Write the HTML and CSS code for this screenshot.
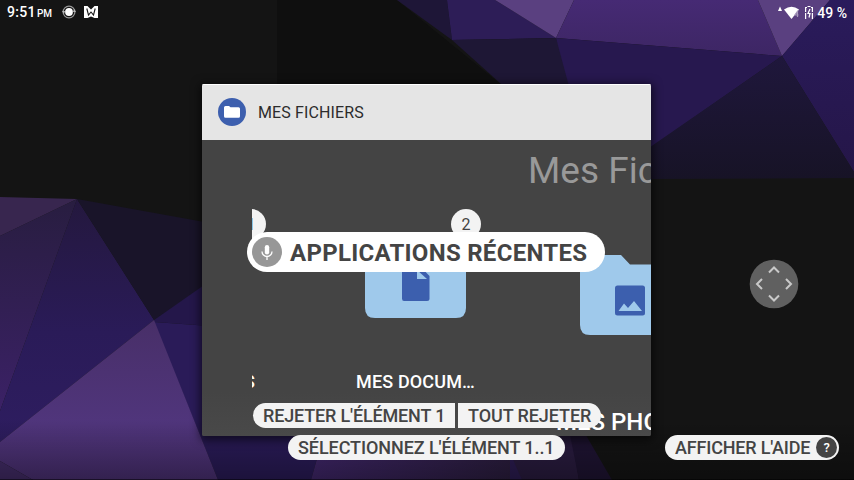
FILE: index.html
```html
<!DOCTYPE html>
<html lang="fr">
<head>
<meta charset="utf-8">
<title>Applications récentes</title>
<link rel="stylesheet" href="styles.css">
</head>
<body>
<main class="screen">
  <svg class="wallpaper" viewBox="0 0 854 480" aria-hidden="true">
    <defs>
      <linearGradient id="facet" x1="0" y1="0" x2="0" y2="1"><stop offset="0" stop-color="#482f68"/><stop offset=".65" stop-color="#50357c"/><stop offset="1" stop-color="#4c3175"/></linearGradient>
      <linearGradient id="deep" x1="0" y1="0" x2="0" y2="1"><stop offset="0" stop-color="#24183e"/><stop offset=".55" stop-color="#2a1b58"/><stop offset="1" stop-color="#2e1d60"/></linearGradient>
      <linearGradient id="left" x1="0" y1="0" x2="0" y2="1"><stop offset="0" stop-color="#281d40"/><stop offset="1" stop-color="#3b2166"/></linearGradient>
      <linearGradient id="dark" x1="0" y1="0" x2="0" y2="1"><stop offset="0" stop-color="#1f173c"/><stop offset="1" stop-color="#171326"/></linearGradient>
      <linearGradient id="right" x1="0" y1="0" x2="0" y2="1"><stop offset="0" stop-color="#2a1b5c"/><stop offset="1" stop-color="#251648"/></linearGradient>
      <linearGradient id="top" x1="0" y1="0" x2="0" y2="1"><stop offset="0" stop-color="#462a74"/><stop offset="1" stop-color="#3d2664"/></linearGradient>
      <linearGradient id="foot" x1="0" y1="0" x2="1" y2="0"><stop offset="0" stop-color="#41276c"/><stop offset="1" stop-color="#2a1d3c"/></linearGradient>
      <linearGradient id="fade" x1="0" y1="0" x2="0" y2="1"><stop offset="0" stop-color="#000" stop-opacity="0"/><stop offset="1" stop-color="#000" stop-opacity=".33"/></linearGradient>
    </defs>
    <rect width="854" height="480" fill="#141414"/>
    <path d="M277 0H397L520 100H277z" fill="#0f0f0f"/>
    <path d="M397 0H447L452 40z" fill="#1e1637"/>
    <path d="M447 0H495L556 38L452 40z" fill="#2d1d57"/>
    <path d="M495 0H574L556 38z" fill="#5a4080"/>
    <path d="M574 0H758L782 56L556 38z" fill="url(#top)"/>
    <path d="M758 0H830L782 56z" fill="#5a4080"/>
    <path d="M830 0H854V172L782 56z" fill="url(#right)"/>
    <path d="M452 40L556 38L575 92H510z" fill="#1e1735"/>
    <path d="M556 38L782 56L640 155L570 90z" fill="#27184f"/>
    <path d="M782 56L854 172V178L640 179V154z" fill="url(#dark)"/>
    <path d="M0 197L77 199L0 236z" fill="#38264f"/>
    <path d="M77 199L0 236V411z" fill="url(#left)"/>
    <path d="M77 199L154 320L0 442V411z" fill="url(#deep)"/>
    <path d="M77 199L210 223V282L154 320z" fill="#191429"/>
    <path d="M154 320L210 281V326L154 322z" fill="#24174a"/>
    <path d="M154 322L210 326V430H325L311 480H218z" fill="#2a1b58"/>
    <path d="M154 320L0 442V461L33 480H218z" fill="url(#facet)"/>
    <path d="M0 461L33 480H0z" fill="#432c68"/>
    <path d="M325 430H515L525 480H311z" fill="url(#foot)"/>
    <path d="M510 430H520L530 480H510z" fill="#2c1c52"/>
    <path d="M500 430H571L579 480H522z" fill="#2a1c40"/>
    <path d="M569 430H583L612 480H579z" fill="#1f1433"/>
    <rect y="420" width="854" height="60" fill="url(#fade)"/>
    <rect y="479" width="854" height="1" fill="#000" opacity=".5"/>
  </svg>

  <header class="status">
    <div class="status-group">
      <span class="clock">9:51</span><span class="meridiem">PM</span>
      <svg class="ico-ring" width="14" height="14" viewBox="0 0 14 14"><circle cx="7" cy="7" r="5.900" fill="none" stroke="#999" stroke-width="1.200"/><path d="M0 6l2 3 1-3zM14 7l-2-3-1 3z" fill="#bbb"/><circle cx="7" cy="7" r="3.900" fill="#fff"/></svg>
      <svg class="ico-m" width="14" height="12" viewBox="0 0 14 12"><path d="M0 0h3.500L7 3.500L10.500 0H14v12h-3.500L7 10.500L3.500 12H0z" fill="#fff"/><path d="M2.800 2.500L4.500 9L7 6l2.500 3L11.200 2.500" fill="none" stroke="#181818" stroke-width="1.100"/></svg>
    </div>
    <div class="status-group">
      <svg width="35" height="15" viewBox="0 0 35 15"><path d="M0 6L2 1.500L4 6z" fill="#fff"/><path d="M6 4.500Q13.500-.8 21 4.500L13.500 14z" fill="#fff"/><path d="M20 5.500l-3 4.500H20.500M19.500 6v6" fill="none" stroke="#a99bbd" stroke-width="1.200"/><path d="M29 2.500H27.600V13.500H29M33 2.500H34.400V13.500H33" fill="none" stroke="#fff" stroke-width="1.200" stroke-dasharray="6 1"/><path d="M29.500 1.500h3M32 4l-2 4.500h2l-1 4" fill="none" stroke="#fff" stroke-width="1.200"/></svg>
      <span class="battery">49 %</span>
    </div>
  </header>

  <section class="card">
    <header class="card-head">
      <svg width="28" height="28" viewBox="0 0 28 28"><circle cx="14" cy="14" r="14" fill="#3d5fae"/><path d="M6 9.500Q6 8 7.500 8H11l1.500 1.200h8Q22 9.200 22 10.700v7.500q0 1.500-1.500 1.500h-13Q6 19.700 6 18.200z" fill="#fff"/></svg>
      <span>MES FICHIERS</span>
    </header>
    <div class="card-body">
      <h1 class="title">Mes Fichiers</h1>
      <div class="folders">
        <div class="folder first">
          <span class="badge">1</span>
          <span class="name">TÉLÉCHARGEMENTS</span>
        </div>
        <div class="folder second">
          <span class="badge">2</span>
          <svg width="101" height="80" viewBox="0 0 101 80"><path d="M10 0H40L50 10H91Q101 10 101 20V70Q101 80 91 80H10Q0 80 0 70V10Q0 0 10 0z" fill="#9fc9eb"/><path d="M39 26H53L64.500 38V60.500Q64.500 63 62 63H39Q37 63 37 60.500V28Q37 26 39 26z" fill="#3c5fae"/><path d="M52 32L62 41H52z" fill="#9fc9eb"/></svg>
          <span class="name">MES DOCUM…</span>
        </div>
        <div class="folder third">
          <svg width="101" height="80" viewBox="0 0 101 80"><path d="M10 0H41L50 9.500H101V80H10Q0 80 0 70V10Q0 0 10 0z" fill="#9fc9eb"/><rect x="35" y="30.500" width="30" height="30" rx="2.500" fill="#3c5fae"/><path d="M38.500 56L44 48.500l4 4.500L54 46l8 10z" fill="#9fc9eb"/></svg>
          <span class="name">MES PHOTOS</span>
        </div>
      </div>
    </div>
  </section>

  <div class="pill voice">
    <svg width="30" height="30" viewBox="0 0 30 30"><circle cx="15" cy="15" r="15" fill="#979797"/><rect x="12.800" y="8" width="4.400" height="9.500" rx="2.200" fill="#fff"/><path d="M10 14.500a5 5 0 0 0 10 0M15 19.500V23" fill="none" stroke="#fff" stroke-width="1.300"/></svg>
    <span>APPLICATIONS RÉCENTES</span>
  </div>
  <div class="actions">
    <span class="pill dismiss">REJETER L'ÉLÉMENT 1</span>
    <span class="pill dismiss-all">TOUT REJETER</span>
  </div>
  <div class="pill select"><span>SÉLECTIONNEZ L'ÉLÉMENT 1..1</span></div>
  <div class="pill help"><span>AFFICHER L'AIDE</span><b>?</b></div>
  <svg class="pad" width="50" height="50" viewBox="0 0 50 50"><circle cx="25" cy="25" r="24.300" fill="#606060"/><path d="M20 13.500l5-5 5 5M20 36.500l5 5 5-5M13 20l-5 5 5 5M37 20l5 5-5 5" fill="none" stroke="#c9c9c9" stroke-width="2"/></svg>
</main>
</body>
</html>
```
FILE: styles.css
```css
* { box-sizing: border-box; }
body { margin: 0; font-family: Roboto, "Liberation Sans", sans-serif; }
svg { display: block; flex: none; }
.screen { position: relative; width: 854px; height: 480px; overflow: hidden; background: #141414; }
.wallpaper { position: absolute; inset: 0; width: 854px; height: 480px; }

.status { position: relative; display: flex; justify-content: space-between; height: 24px; padding: 0 7px 0 7px; color: #fff; font-weight: 500; }
.status-group { display: flex; align-items: center; }
.clock { width: 30px; font-size: 14px; letter-spacing: .3px; line-height: 24px; white-space: nowrap; }
.meridiem { width: 14px; padding-top: 3px; font-size: 10px; letter-spacing: -.2px; }
.ico-ring { margin-left: 11px; }
.ico-m { margin-left: 8px; }
.battery { margin-left: 4px; padding-top: 1px; font-size: 14px; white-space: nowrap; }

.card { position: relative; width: 449px; height: 352px; margin: 60px 0 0 202px; overflow: hidden; border-radius: 2px; background: #444; box-shadow: 0 2px 10px 2px rgba(0, 0, 0, .6); }
.card-head { display: flex; align-items: center; gap: 12px; height: 56px; padding: 0 16px 1px; border-top: 1px solid #fff; background: #e5e5e5; color: #2c2c2c; font-size: 16px; letter-spacing: .13px; }
.card-body { height: 296px; overflow: hidden; background: linear-gradient(#444 85%, #494949); }
.title { margin: 9px 0 0 326px; font-size: 37px; font-weight: 400; line-height: 44px; color: #999; white-space: nowrap; }
.folders { display: flex; align-items: flex-start; margin-left: 50px; width: 420px; }
.folder { display: flex; flex: none; flex-direction: column; white-space: nowrap; color: #fff; font-weight: 500; }
.first { width: 18px; margin-top: 16px; overflow: hidden; align-items: flex-end; }
.first .badge { margin-right: 4px; }
.first .name { width: 18px; margin-top: 132px; padding-right: 15px; direction: rtl; }
.second { width: 122px; margin: 16px 0 0 85px; }
.second .badge { margin-left: 96px; }
.second svg { margin: -1px 0 0 10px; }
.second .name { margin: 53px 0 0 1px; letter-spacing: .15px; }
.third { width: 130px; margin: 62px 0 0 78px; }
.third svg { margin-left: 25px; }
.third .name { margin: 72px 0 0 1px; font-size: 24px; line-height: 30px; }
.badge { display: flex; align-items: center; justify-content: center; flex: none; width: 30px; height: 30px; border-radius: 50%; background: #f3f3f3; color: #444; font-size: 16px; font-weight: 400; }
.name { font-size: 18px; line-height: 22px; }

.pill { display: flex; align-items: center; height: 25px; border-radius: 13px; background: #f3f3f3; color: #444; font-size: 18px; font-weight: 500; white-space: nowrap; }
.voice { position: absolute; left: 247px; top: 232px; width: 358px; height: 40px; padding-left: 5px; gap: 8px; border-radius: 20px; background: #fff; font-size: 24px; font-weight: 700; letter-spacing: .28px; }
.voice span { padding-top: 2px; }
.actions { position: absolute; left: 253px; top: 403px; display: flex; gap: 3px; }
.dismiss { width: 202px; padding-left: 10px; border-radius: 13px 0 0 13px; letter-spacing: -.16px; }
.dismiss-all { width: 143px; padding-left: 10px; border-radius: 0 13px 13px 0; letter-spacing: -.08px; }
.select { position: absolute; left: 288px; top: 435px; width: 277px; padding-left: 10px; letter-spacing: -.08px; }
.help { position: absolute; left: 665px; top: 435px; width: 174px; padding: 0 2px 0 10px; justify-content: space-between; letter-spacing: -.18px; }
.help b { display: flex; align-items: center; justify-content: center; width: 21px; height: 21px; border-radius: 50%; background: #444; color: #fff; font-size: 13px; font-weight: 500; }
.pad { position: absolute; left: 749px; top: 259px; }
```
